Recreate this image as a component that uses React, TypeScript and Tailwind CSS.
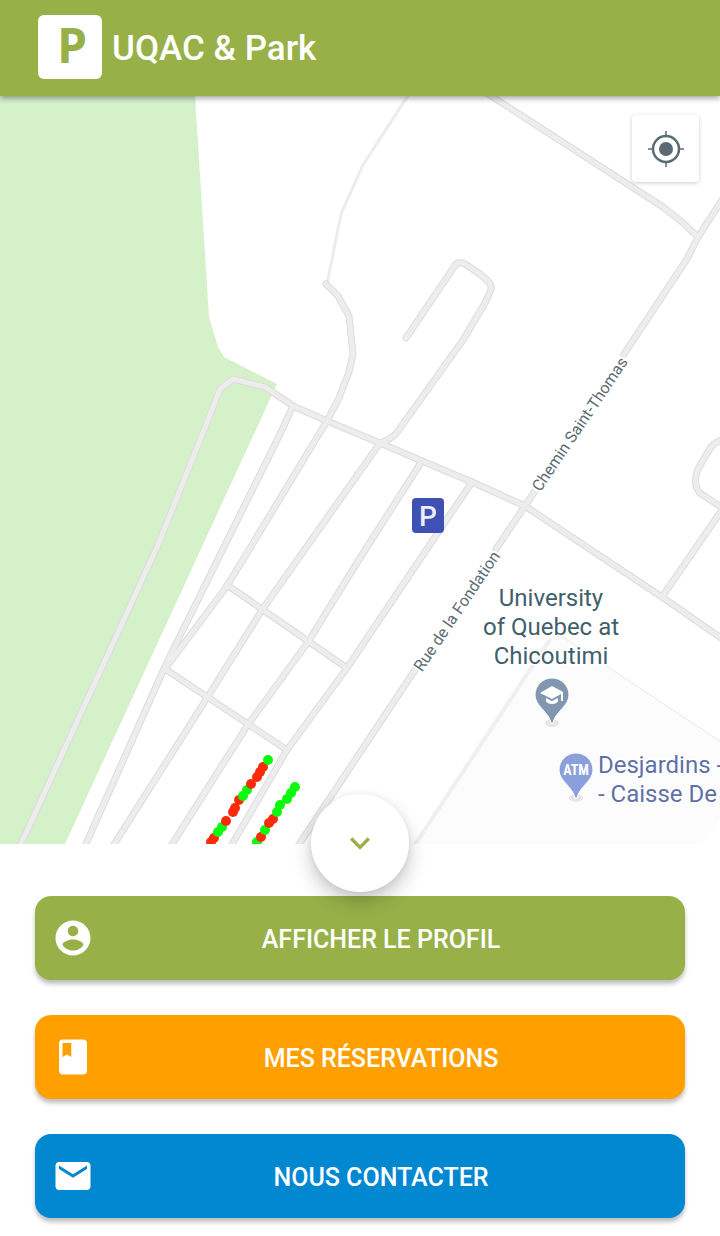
import React from "react";

const ROADS = [
  "M20 846 L158 545 L204 430 L220 389 L233 379 L265 387 L293 406 L327 421 L380 443 L422 461 L472 482 L525 506 L662 597 L724 640",
  "M326 284 L338 296 L349 316 L353 354 L349 372 L339 398 L327 421 L227 586 L165 669",
  "M293 406 L282 430 L173 650 L163 671 L85 846",
  "M406 338 L454 267 Q458 260 465 264 L480 274 L488 281 Q493 286 490 292 L485 303 L463 340 L398 431 Q394 438 380 443 L262 610 L207 698 L113 846",
  "M422 461 L360 558 L308 642 L247 726 L171 846",
  "M472 482 L347 668 L287 750 L231 846",
  "M227 585 L347 668",
  "M165 669 L287 750",
  "M298 846 L415 670",
  "M496 549 L525 506 L535 491",
  "M624 354 L687 259 L698 237 L724 197",
  "M488 94 L663 207 L682 222 L698 237",
  "M724 439 Q713 443 709 450 L698 469 Q692 484 700 493 L724 509",
  "M724 507 L662 597",
];

type Spot = { x: number; y: number; free: boolean };

const SPOTS: Spot[] = [
  { x: 211, y: 842, free: false },
  { x: 214, y: 838, free: false },
  { x: 218, y: 832, free: true },
  { x: 222, y: 827, free: true },
  { x: 226, y: 821, free: false },
  { x: 233, y: 812, free: false },
  { x: 235, y: 808, free: false },
  { x: 239, y: 800, free: false },
  { x: 243, y: 796, free: true },
  { x: 247, y: 790, free: true },
  { x: 251, y: 784, free: false },
  { x: 257, y: 777, free: false },
  { x: 260, y: 772, free: false },
  { x: 263, y: 767, free: false },
  { x: 268, y: 760, free: true },
  { x: 257, y: 842, free: true },
  { x: 261, y: 837, free: false },
  { x: 265, y: 830, free: true },
  { x: 269, y: 823, free: false },
  { x: 273, y: 819, free: false },
  { x: 277, y: 812, free: true },
  { x: 280, y: 805, free: true },
  { x: 287, y: 799, free: true },
  { x: 291, y: 793, free: true },
  { x: 295, y: 787, free: true },
];

function Pin({ x, y, color, children }: { x: number; y: number; color: string; children: React.ReactNode }) {
  return (
    <g transform={`translate(${x} ${y})`}>
      <ellipse cx="0" cy="28" rx="7" ry="4" fill="#e6e6e6" />
      <path
        d="M0 -17 A17 17 0 0 1 17 0 C17 11 3 17 1 28 H-1 C-3 17 -17 11 -17 0 A17 17 0 0 1 0 -17 Z"
        fill={color}
        stroke="#fff"
        strokeWidth="1"
      />
      {children}
    </g>
  );
}

function CampusMap() {
  return (
    <svg
      viewBox="0 96 720 748"
      preserveAspectRatio="xMidYMid slice"
      className="absolute inset-0 size-full font-['Roboto',sans-serif]"
      role="img"
      aria-label="Plan"
    >
      <path d="M0 96 H195 L209 317 L218 347 L224 357 L277 384 L65 844 H0 Z" fill="#d4f1c9" />
      <path d="M552 632 L720 741 L724 812 L702 844 H413 Z" fill="#fcfcfc" />
      <path d="M558 634 L724 744" stroke="#e6e6e6" strokeWidth="1" />
      <path d="M551 638 L414 846" stroke="#f0f0f0" strokeWidth="4" />
      <path d="M409 94 L363 165 L341 214 L327 284" fill="none" stroke="#ececec" strokeWidth="3" />
      <g fill="none" strokeLinecap="round" strokeLinejoin="round">
        {ROADS.map((d) => (
          <path key={d} d={d} stroke="#dcdcdc" strokeWidth="7" />
        ))}
        {ROADS.map((d) => (
          <path key={d} d={d} stroke="#ededed" strokeWidth="5" />
        ))}
      </g>
      {SPOTS.map((s) => (
        <circle key={`${s.x}-${s.y}`} cx={s.x} cy={s.y} r="5" fill={s.free ? "#0cfa0c" : "#ff2a0a"} />
      ))}

      <g fontSize="16" fill="#5b6b73" stroke="#fff" strokeWidth="4" paintOrder="stroke" textAnchor="middle">
        <text transform="translate(581 425) rotate(-56)" y="4">Chemin Saint-Thomas</text>
        <text transform="translate(458 612) rotate(-56)" y="4">Rue de la Fondation</text>
      </g>

      <g fontSize="24" fill="#3f5f6c" stroke="#fff" strokeWidth="3" paintOrder="stroke" textAnchor="middle">
        <text x="551" y="606">University</text>
        <text x="551" y="635">of Quebec at</text>
        <text x="551" y="664">Chicoutimi</text>
      </g>
      <g fontSize="24" fill="#5f70a8" stroke="#fff" strokeWidth="3" paintOrder="stroke">
        <text x="598" y="773">Desjardins -</text>
        <text x="598" y="802">- Caisse De</text>
      </g>

      <Pin x={552} y={695} color="#8197b0">
        <path d="M-12 -2 L0 -9 L11 -3 V6 H9 V-1 L0 4 Z" fill="#fff" />
        <path d="M-6 3 L0 6 L6 3 V6 Q5 9 0 9 Q-5 9 -6 6 Z" fill="#fff" />
      </Pin>
      <Pin x={576} y={770} color="#8b9fdc">
        <text
          y="5"
          fontSize="14"
          fontWeight="700"
          textAnchor="middle"
          fill="#fff"
          className="font-['Liberation_Sans_Narrow','Roboto_Condensed','Roboto',sans-serif]"
        >
          ATM
        </text>
      </Pin>

      <rect x="412" y="498" width="32" height="35" rx="4" fill="#3f51b5" />
      <text x="428" y="526" fontSize="28" fontWeight="500" textAnchor="middle" fill="#eceefa">P</text>
    </svg>
  );
}

function LocateIcon() {
  return (
    <svg viewBox="0 0 38 38" className="size-[38px]" fill="none" stroke="#5a6b73" aria-hidden="true">
      <circle cx="19" cy="19" r="13" strokeWidth="2.5" />
      <circle cx="19" cy="19" r="7" fill="#5a6b73" stroke="none" />
      <path d="M19 1 V7 M19 31 V37 M1 19 H7 M31 19 H37" strokeWidth="1.5" />
    </svg>
  );
}

const ACTIONS = [
  {
    label: "Afficher le profil",
    color: "bg-[#97b148]",
    icon: "M12 2C6.48 2 2 6.48 2 12s4.48 10 10 10 10-4.48 10-10S17.52 2 12 2zm0 3c1.66 0 3 1.34 3 3s-1.34 3-3 3-3-1.34-3-3 1.34-3 3-3zm0 14.2c-2.5 0-4.71-1.28-6-3.22.03-1.99 4-3.08 6-3.08 1.99 0 5.97 1.09 6 3.08-1.29 1.94-3.5 3.22-6 3.22z",
  },
  {
    label: "Mes réservations",
    color: "bg-[#ffa000]",
    icon: "M18 2H6c-1.1 0-2 .9-2 2v16c0 1.1.9 2 2 2h12c1.1 0 2-.9 2-2V4c0-1.1-.9-2-2-2zM6 4h5v8l-2.5-1.5L6 12V4z",
  },
  {
    label: "Nous contacter",
    color: "bg-[#0288d1]",
    icon: "M20 4H4c-1.1 0-1.99.9-1.99 2L2 18c0 1.1.9 2 2 2h16c1.1 0 2-.9 2-2V6c0-1.1-.9-2-2-2zm0 4l-8 5-8-5V6l8 5 8-5v2z",
  },
];

export default function App() {
  return (
    <div className="flex min-h-screen flex-col bg-white font-['Roboto',sans-serif]">
      <header className="relative z-10 flex items-center gap-[10px] bg-[#97b148] px-[38px] pt-[15px] pb-[17px] shadow-[0_2px_6px_rgba(0,0,0,0.4)]">
        <div className="flex size-16 items-center justify-center rounded-md bg-white pb-1 pl-1 font-['Open_Sans',sans-serif] text-5xl leading-none font-bold text-[#97b148]">
          P
        </div>
        <h1 className="pt-1 text-[35px] leading-10 font-medium text-white">UQAC &amp; Park</h1>
      </header>

      <main className="relative min-h-96 flex-1">
        <CampusMap />
        <button
          type="button"
          aria-label="Ma position"
          className="absolute top-[19px] right-[21px] flex size-[67px] items-center justify-center rounded-sm bg-white shadow-[0_1px_4px_rgba(0,0,0,0.2)]"
        >
          <LocateIcon />
        </button>
        <button
          type="button"
          aria-label="Réduire le menu"
          className="absolute -bottom-12 left-1/2 z-10 flex size-[98px] -translate-x-1/2 items-center justify-center rounded-full bg-white shadow-[0_10px_20px_rgba(0,0,0,0.2),0_2px_8px_rgba(0,0,0,0.08)]"
        >
          <svg viewBox="0 0 24 24" className="size-10 fill-[#97b148]" aria-hidden="true">
            <path d="M16.59 8.59L12 13.17 7.41 8.59 6 10l6 6 6-6z" />
          </svg>
        </button>
      </main>

      <nav className="flex flex-col gap-[35px] px-[35px] pt-[52px] pb-[18px]">
        {ACTIONS.map((a) => (
          <button
            key={a.label}
            type="button"
            className={`flex h-[84px] items-center rounded-2xl px-[17px] text-[25px] font-medium text-white uppercase shadow-[0_4px_4px_rgba(0,0,0,0.25)] ${a.color}`}
          >
            <svg viewBox="0 0 24 24" className="size-[42px] fill-white" aria-hidden="true">
              <path d={a.icon} />
            </svg>
            <span className="flex-1 pt-1">{a.label}</span>
          </button>
        ))}
      </nav>
    </div>
  );
}
